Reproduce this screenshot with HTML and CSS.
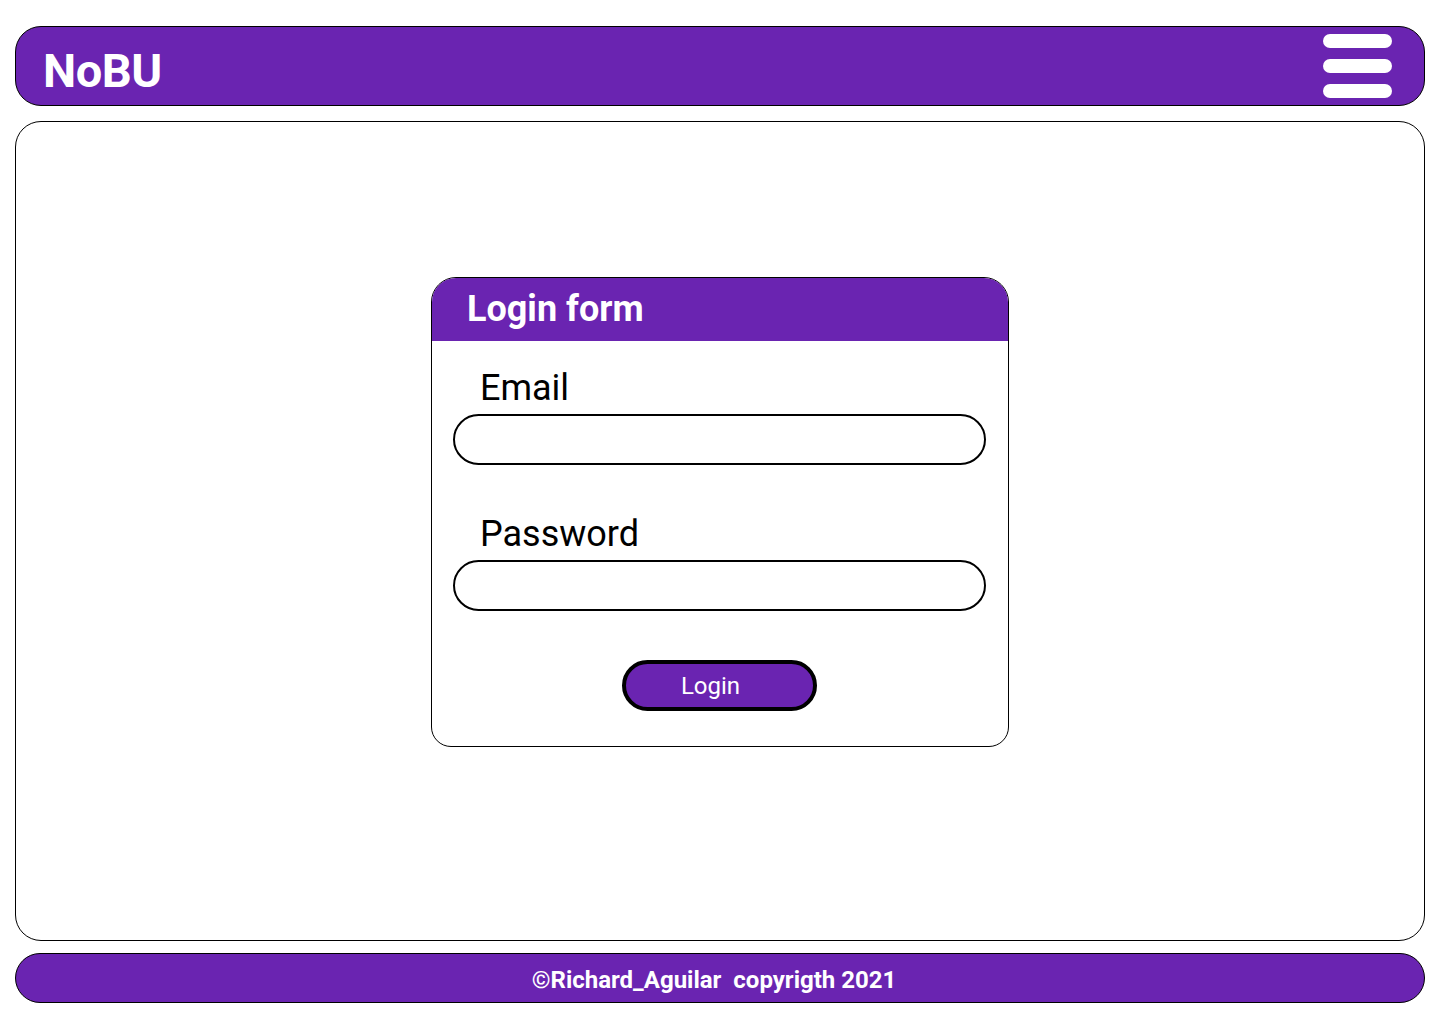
FILE: index.html
```html
<!DOCTYPE html>
<html lang="en">
<head>
<meta charset="utf-8">
<title>NoBU - Login</title>
<link rel="stylesheet" href="styles.css">
</head>
<body>
<div class="page">
  <header class="topbar">
    <div class="brand">NoBU</div>
    <button class="menu" aria-label="Menu">
      <span class="bar"></span>
      <span class="bar"></span>
      <span class="bar"></span>
    </button>
  </header>
  <main class="content">
    <form class="card">
      <div class="card-head">Login form</div>
      <div class="card-body">
        <label class="field-label" for="email">Email</label>
        <input class="field" id="email" type="email">
        <label class="field-label pw" for="password">Password</label>
        <input class="field" id="password" type="password">
        <div class="actions">
          <button class="btn" type="button">Login</button>
        </div>
      </div>
    </form>
  </main>
  <footer class="footer">©Richard_Aguilar&nbsp; copyrigth 2021</footer>
</div>
</body>
</html>
```

FILE: styles.css
```css
* { box-sizing: border-box; }
html, body { margin: 0; padding: 0; background: #fff; }
body { font-family: Roboto, "Liberation Sans", sans-serif; }
.page {
  width: 1440px;
  height: 1024px;
  padding: 26px 15px 0 15px;
  display: flex;
  flex-direction: column;
}
.topbar {
  height: 80px;
  background: #6a24b1;
  border: 1px solid #000;
  border-radius: 26px;
  display: flex;
  align-items: center;
  justify-content: space-between;
  padding: 0 32px 0 27px;
}
.brand {
  color: #fff;
  font-weight: 700;
  font-size: 47px;
  line-height: 1;
  margin-top: 8px;
  letter-spacing: -0.5px;
}
.menu {
  background: none;
  border: 0;
  padding: 0;
  display: flex;
  flex-direction: column;
  gap: 11px;
  cursor: pointer;
}
.bar {
  display: block;
  width: 69px;
  height: 14px;
  background: #fff;
  border-radius: 7px;
}
.content {
  margin-top: 15px;
  height: 820px;
  border: 1px solid #000;
  border-radius: 26px;
  display: flex;
  justify-content: center;
  padding-top: 155px;
}
.card {
  width: 578px;
  height: 470px;
  border: 1px solid #000;
  border-radius: 25px 25px 20px 20px;
  overflow: hidden;
  margin: 0;
}
.card-head {
  height: 63px;
  background: #6a24b1;
  color: #fff;
  font-weight: 700;
  font-size: 36px;
  line-height: 63px;
  padding-left: 35px;
}
.card-body {
  padding: 25px 22px 0 21px;
  display: flex;
  flex-direction: column;
}
.field-label {
  font-size: 36px;
  line-height: 44px;
  color: #000;
  padding-left: 27px;
  margin-bottom: 4px;
}
.field-label.pw { margin-top: 47px; }
.field {
  width: 533px;
  height: 51px;
  border: 2px solid #000;
  border-radius: 26px;
  background: #fff;
  outline: none;
  font: inherit;
  font-size: 20px;
  padding: 0 20px;
}
.actions {
  display: flex;
  justify-content: center;
  margin-top: 49px;
}
.btn {
  width: 195px;
  height: 51px;
  background: #6a24b1;
  border: 4px solid #000;
  border-radius: 26px;
  color: #fff;
  font-family: Roboto, "Liberation Sans", sans-serif;
  font-size: 24px;
  line-height: 1;
  padding: 0 18px 0 0;
  cursor: pointer;
}
.footer {
  margin-top: 12px;
  height: 50px;
  background: #6a24b1;
  border: 1px solid #000;
  border-radius: 25px;
  color: #fff;
  font-weight: 700;
  font-size: 24px;
  display: flex;
  align-items: center;
  justify-content: center;
  padding: 4px 12px 0 0;
  white-space: pre;
}
```
